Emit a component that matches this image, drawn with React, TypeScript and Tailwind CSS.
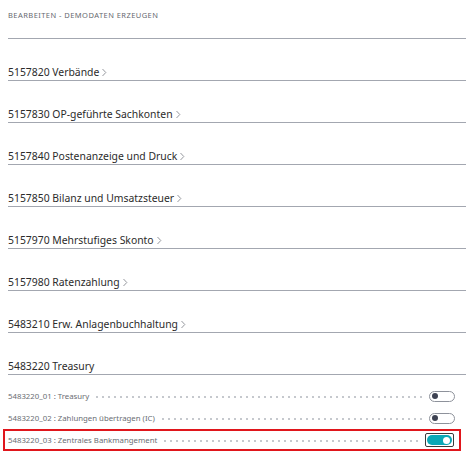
import React from "react";

const sections = [
  "5157820 Verbände",
  "5157830 OP-geführte Sachkonten",
  "5157840 Postenanzeige und Druck",
  "5157850 Bilanz und Umsatzsteuer",
  "5157970 Mehrstufiges Skonto",
  "5157980 Ratenzahlung",
  "5483210 Erw. Anlagenbuchhaltung",
];

function Chevron() {
  return (
    <svg width="6" height="9" viewBox="0 0 6 9" className="ml-[2px]">
      <path d="M1.5 1 L4.8 4.5 L1.5 8" fill="none" stroke="#8a8d94" strokeWidth="0.9" />
    </svg>
  );
}

function Toggle({ on }: { on: boolean }) {
  if (on) {
    return (
      <div className="border border-[#3a3a3a] rounded-[2px] p-[1px] flex">
        <div className="w-[25px] h-[10px] rounded-full bg-[#0aa8b6] flex items-center justify-end pr-[2px]">
          <div className="w-[7px] h-[7px] rounded-full bg-white" />
        </div>
      </div>
    );
  }
  return (
    <div className="w-[26px] h-[11px] rounded-full border-[1.5px] border-[#8e929b] flex items-center pl-[2px] mr-[1px]">
      <div className="w-[6px] h-[6px] rounded-full bg-[#3d4252]" />
    </div>
  );
}

function Row({ label, on, highlight }: { label: string; on: boolean; highlight?: boolean }) {
  return (
    <div
      className={
        "h-[22px] flex items-center " +
        (highlight ? "border-2 border-[#e0161c] -ml-[5px] pl-[3px] mr-[3px] pr-[5px]" : "pr-[8px]")
      }
    >
      <span className="text-[7.8px] leading-[10px] text-[#6a6d73] whitespace-nowrap">{label}</span>
      <div className="flex-1 mx-[5px] h-[2px] mt-[1px] bg-[radial-gradient(circle,#c4c7cc_0.7px,transparent_1.1px)] bg-[length:6px_2px]" />
      <Toggle on={on} />
    </div>
  );
}

export default function App() {
  return (
    <div
      className="w-[466px] h-[466px] bg-white pl-[8px] overflow-hidden"
      style={{ fontFamily: '"Noto Sans", "Open Sans", sans-serif' }}
    >
      <div className="h-[39px] border-b border-[#a3a7b0] pt-[10px]">
        <div className="text-[7.5px] leading-[10px] tracking-[0.45px] text-[#66696f] uppercase">
          Bearbeiten - Demodaten erzeugen
        </div>
      </div>
      {sections.map((s) => (
        <div key={s} className="h-[42px] border-b border-[#a3a7b0] flex items-end pb-[1px]">
          <div className="flex items-center leading-[14px] text-[10.4px] text-[#2b2b2b]">
            <span>{s}</span>
            <Chevron />
          </div>
        </div>
      ))}
      <div className="h-[42px] border-b border-[#a3a7b0] flex items-end pb-[1px]">
        <span className="leading-[14px] text-[10.4px] text-[#2b2b2b]">5483220 Treasury</span>
      </div>
      <div className="pt-[10px] pr-[2px]">
        <Row label="5483220_01 : Treasury" on={false} />
        <Row label="5483220_02 : Zahlungen übertragen (IC)" on={false} />
        <Row label="5483220_03 : Zentrales Bankmangement" on={true} highlight />
      </div>
    </div>
  );
}
